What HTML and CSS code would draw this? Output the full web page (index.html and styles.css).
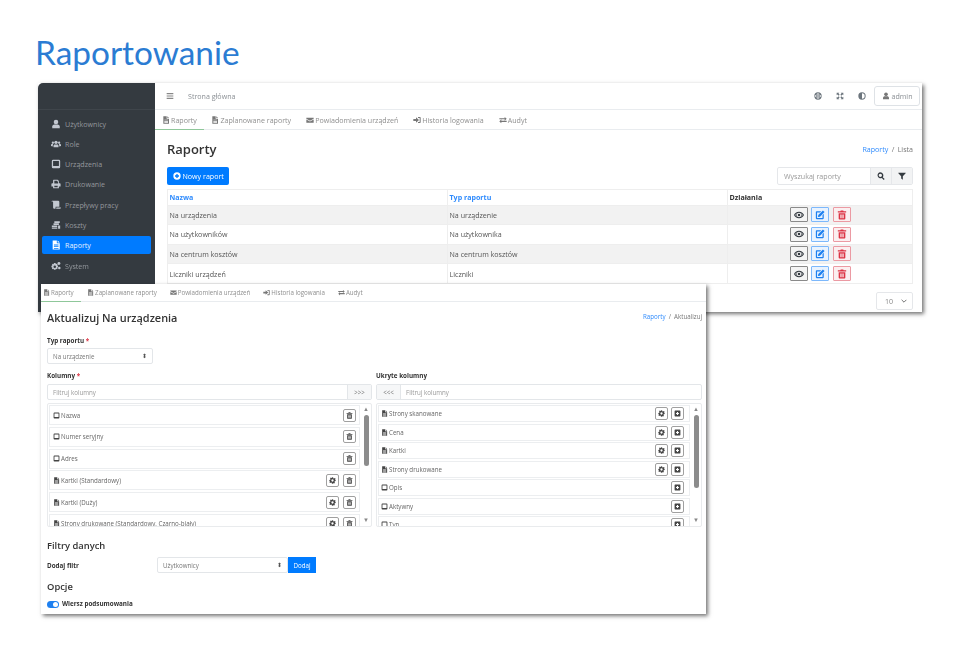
FILE: index.html
```html
<!DOCTYPE html>
<html lang="pl">
<head>
  <meta charset="UTF-8">
  <title>Raportowanie</title>
  <link rel="stylesheet" href="styles.css">
</head>
<body>
  <svg class="defs" width="0" height="0">
    <symbol id="i-user" viewBox="0 0 24 24"><circle cx="12" cy="7" r="5.5"/><path d="M3 22v-4c0-3 3-5 5-5h8c2 0 5 2 5 5v4z"/></symbol>
    <symbol id="i-users" viewBox="0 0 24 24"><circle cx="12" cy="8" r="4"/><circle cx="4.5" cy="9" r="2.8"/><circle cx="19.5" cy="9" r="2.8"/><path d="M6 20v-4c0-2 2-3 3-3h6c1 0 3 1 3 3v4zM0 17v-3c0-1 1-2 2-2h3l-1 6zM24 17v-3c0-1-1-2-2-2h-3l1 6z"/></symbol>
    <symbol id="i-tablet" viewBox="0 0 24 24"><path fill-rule="evenodd" d="M5 2h14a3 3 0 0 1 3 3v14a3 3 0 0 1-3 3H5a3 3 0 0 1-3-3V5a3 3 0 0 1 3-3zm0 3v12h14V5z"/></symbol>
    <symbol id="i-print" viewBox="0 0 24 24"><path fill-rule="evenodd" d="M6 2h10l3 3v5h2a2 2 0 0 1 2 2v6h-4v4H5v-4H1v-6a2 2 0 0 1 2-2h2V3zm2 2v7h9V6h-2V4zM8 16v4h8v-4z"/></symbol>
    <symbol id="i-scroll" viewBox="0 0 24 24"><path d="M3 2h14a3 3 0 0 1 3 3v11h-9v3a2 2 0 0 1-2 2H8a3 3 0 0 1-3-3V5a1.5 1.5 0 0 0-1.500-1.500H1A2 2 0 0 1 3 2z"/><path d="M13 18h11a3 3 0 0 1-3 3H12a4 4 0 0 0 1-3z"/></symbol>
    <symbol id="i-coins" viewBox="0 0 24 24"><path d="M8 3h13v4H8zM6 8h13v4H6zM2 13h13v4H2zM2 18h13v3H2zM17 13h5v8h-5z"/></symbol>
    <symbol id="i-file" viewBox="0 0 24 24"><path fill-rule="evenodd" d="M4 1h10v7h7v15H4zM16 1l5 5h-5zM7 11v2h11v-2zm0 4v2h11v-2zm0 4v2h11v-2z"/></symbol>
    <symbol id="i-cogs" viewBox="0 0 24 24"><path fill-rule="evenodd" d="M7 5h4l.6 2.4 2.2-.9 2 2-1 2.2 2.200.8v3.500l-2.200.6 1 2.200-2 2-2.200-1L11 21H7l-.6-2.200-2.200 1-2-2 1-2.200L1 15v-3.500l2.200-.6-1-2.200 2-2 2.200 1zm2 5.500a3 3 0 1 0 0 6 3 3 0 0 0 0-6z"/><circle cx="19" cy="6" r="3.5"/><circle cx="20" cy="17" r="3"/></symbol>
    <symbol id="i-mail" viewBox="0 0 24 24"><path d="M1 5h22v3l-11 6L1 8zM1 10.500l11 6 11-6V20H1z"/></symbol>
    <symbol id="i-signin" viewBox="0 0 24 24"><path d="M1 9h8V4l9 8-9 8v-5H1z"/><path d="M15 3h6a2 2 0 0 1 2 2v14a2 2 0 0 1-2 2h-6v-3h5V6h-5z"/></symbol>
    <symbol id="i-exchange" viewBox="0 0 24 24"><path d="M1 7h16V3l6 5.500-6 5.500v-4H1zM23 14H7v-4l-6 6.500L7 22v-4h16z"/></symbol>
    <symbol id="i-bars" viewBox="0 0 24 24"><path d="M2 3h20v3.500H2zM2 10.200h20v3.500H2zM2 17.500h20V21H2z"/></symbol>
    <symbol id="i-globe" viewBox="0 0 24 24"><path fill-rule="evenodd" d="M12 1a11 11 0 1 1 0 22 11 11 0 0 1 0-22zM11 3c-2 1-3 3-3.500 5H11zm2 0v5h3.500c-.5-2-1.500-4-3.500-5zM3.500 10a9 9 0 0 0 0 4h3.800a20 20 0 0 1 0-4zm5.800 0a20 20 0 0 0 0 4H11v-4zm3.700 0v4h1.700a20 20 0 0 0 0-4zm3.700 0a20 20 0 0 1 0 4h3.800a9 9 0 0 0 0-4zM7.500 16c.5 2 1.500 4 3.500 5v-5zm5.500 0v5c2-1 3-3 3.500-5z"/></symbol>
    <symbol id="i-expand" viewBox="0 0 24 24"><path d="M2 2h8L7.500 4.500 11 8l-3 3-3.500-3.500L2 10zM22 2v8l-2.500-2.500L16 11l-3-3 3.500-3.500L14 2zM2 22v-8l2.500 2.500L8 13l3 3-3.500 3.500L10 22zM22 22h-8l2.500-2.500L13 16l3-3 3.500 3.500L22 14z"/></symbol>
    <symbol id="i-half" viewBox="0 0 24 24"><path fill-rule="evenodd" d="M12 1a11 11 0 1 1 0 22 11 11 0 0 1 0-22zm0 3v16a8 8 0 0 0 0-16z"/></symbol>
    <symbol id="i-plus" viewBox="0 0 24 24"><path fill-rule="evenodd" d="M12 1a11 11 0 1 1 0 22 11 11 0 0 1 0-22zm-2 5v4H6v4h4v4h4v-4h4v-4h-4V6z"/></symbol>
    <symbol id="i-search" viewBox="0 0 24 24"><path fill-rule="evenodd" d="M10 1a9 9 0 0 1 7.200 14.400l5.800 5.800-2.800 2.800-5.800-5.800A9 9 0 1 1 10 1zm0 4a5 5 0 1 0 0 10 5 5 0 0 0 0-10z"/></symbol>
    <symbol id="i-filter" viewBox="0 0 24 24"><path d="M1 2h22v2l-8.500 9v10l-5-3.500V13L1 4z"/></symbol>
    <symbol id="i-eye" viewBox="0 0 24 24"><path fill-rule="evenodd" d="M12 4c6 0 10 4 12 8-2 4-6 8-12 8S2 16 0 12c2-4 6-8 12-8zm0 2.500a5.500 5.500 0 1 0 0 11 5.500 5.500 0 0 0 0-11zM3 12c1 2 2.500 3.500 4 4.500a7 7 0 0 1 0-9C5.500 8.500 4 10 3 12zm14-4.500a7 7 0 0 1 0 9c1.500-1 3-2.500 4-4.500-1-2-2.500-3.500-4-4.500z"/><circle cx="12" cy="12" r="3"/></symbol>
    <symbol id="i-edit" viewBox="0 0 24 24"><path d="M4 3h11l-3 3H5v13h13v-7l3-3v11a2 2 0 0 1-2 2H4a2 2 0 0 1-2-2V5a2 2 0 0 1 2-2z"/><path d="M19 1l4 4-11 11-5 1 1-5z"/></symbol>
    <symbol id="i-trash" viewBox="0 0 24 24"><path fill-rule="evenodd" d="M9 1h6l1 2h6v3H2V3h6zM4 8h16v13a2 2 0 0 1-2 2H6a2 2 0 0 1-2-2zm4 3v9h2v-9zm3 0v9h2v-9zm3 0v9h2v-9z"/></symbol>
    <symbol id="i-gear" viewBox="0 0 24 24"><path fill-rule="evenodd" d="M10 1h4l.7 3.200 2.400 1 2.800-1.700 2.800 2.800-1.700 2.800 1 2.400L23 10v4l-3.200.7-1 2.400 1.700 2.800-2.800 2.800-2.800-1.700-2.400 1L14 23h-4l-.7-3.200-2.400-1-2.800 1.700-2.800-2.800 1.700-2.800-1-2.400L1 14v-4l3.200-.7 1-2.400-1.700-2.800 2.800-2.800 2.800 1.700 2.400-1zm2 7a4 4 0 1 0 0 8 4 4 0 0 0 0-8z"/></symbol>
    <symbol id="i-addbox" viewBox="0 0 24 24"><path fill-rule="evenodd" d="M4 2h16a2 2 0 0 1 2 2v16a2 2 0 0 1-2 2H4a2 2 0 0 1-2-2V4a2 2 0 0 1 2-2zm6 5v3H7v4h3v3h4v-3h3v-4h-3V7z"/></symbol>
  </svg>

  <h1 class="slide-title">Raportowanie</h1>

  <!-- Back window: report list -->
  <section class="window window-back">
    <aside class="sidebar">
      <div class="brand"></div>
      <a class="side-link"><svg class="ico"><use href="#i-user"/></svg>Użytkownicy</a>
      <a class="side-link"><svg class="ico"><use href="#i-users"/></svg>Role</a>
      <a class="side-link"><svg class="ico"><use href="#i-tablet"/></svg>Urządzenia</a>
      <a class="side-link"><svg class="ico"><use href="#i-print"/></svg>Drukowanie</a>
      <a class="side-link"><svg class="ico"><use href="#i-scroll"/></svg>Przepływy pracy</a>
      <a class="side-link"><svg class="ico"><use href="#i-coins"/></svg>Koszty</a>
      <a class="side-link active"><svg class="ico"><use href="#i-file"/></svg>Raporty</a>
      <a class="side-link"><svg class="ico"><use href="#i-cogs"/></svg>System</a>
    </aside>
    <div class="main">
      <header class="topbar">
        <svg class="ico top-bars"><use href="#i-bars"/></svg>
        <span class="home">Strona główna</span>
        <span class="spacer"></span>
        <svg class="ico top-ico"><use href="#i-globe"/></svg>
        <svg class="ico top-ico"><use href="#i-expand"/></svg>
        <svg class="ico top-ico"><use href="#i-half"/></svg>
        <span class="admin"><svg class="ico"><use href="#i-user"/></svg>admin</span>
      </header>
      <nav class="tabs">
        <a class="tab current"><svg class="ico"><use href="#i-file"/></svg>Raporty</a>
        <a class="tab"><svg class="ico"><use href="#i-file"/></svg>Zaplanowane raporty</a>
        <a class="tab"><svg class="ico"><use href="#i-mail"/></svg>Powiadomienia urządzeń</a>
        <a class="tab"><svg class="ico"><use href="#i-signin"/></svg>Historia logowania</a>
        <a class="tab"><svg class="ico"><use href="#i-exchange"/></svg>Audyt</a>
      </nav>
      <div class="content">
        <div class="head-row">
          <h2 class="page-title">Raporty</h2>
          <div class="crumbs"><a>Raporty</a> / Lista</div>
        </div>
        <div class="tool-row">
          <a class="btn-new"><svg class="ico"><use href="#i-plus"/></svg>Nowy raport</a>
          <div class="search">
            <span class="search-field">Wyszukaj raporty</span>
            <span class="search-btn"><svg class="ico"><use href="#i-search"/></svg></span>
            <span class="search-btn"><svg class="ico"><use href="#i-filter"/></svg></span>
          </div>
        </div>
        <table class="reports">
          <thead>
            <tr><th class="sort">Nazwa</th><th class="sort">Typ raportu</th><th>Działania</th></tr>
          </thead>
          <tbody>
            <tr>
              <td>Na urządzenia</td><td>Na urządzenie</td>
              <td class="acts"><span class="act view"><svg class="ico"><use href="#i-eye"/></svg></span><span class="act edit"><svg class="ico"><use href="#i-edit"/></svg></span><span class="act del"><svg class="ico"><use href="#i-trash"/></svg></span></td>
            </tr>
            <tr>
              <td>Na użytkowników</td><td>Na użytkownika</td>
              <td class="acts"><span class="act view"><svg class="ico"><use href="#i-eye"/></svg></span><span class="act edit"><svg class="ico"><use href="#i-edit"/></svg></span><span class="act del"><svg class="ico"><use href="#i-trash"/></svg></span></td>
            </tr>
            <tr>
              <td>Na centrum kosztów</td><td>Na centrum kosztów</td>
              <td class="acts"><span class="act view"><svg class="ico"><use href="#i-eye"/></svg></span><span class="act edit"><svg class="ico"><use href="#i-edit"/></svg></span><span class="act del"><svg class="ico"><use href="#i-trash"/></svg></span></td>
            </tr>
            <tr>
              <td>Liczniki urządzeń</td><td>Liczniki</td>
              <td class="acts"><span class="act view"><svg class="ico"><use href="#i-eye"/></svg></span><span class="act edit"><svg class="ico"><use href="#i-edit"/></svg></span><span class="act del"><svg class="ico"><use href="#i-trash"/></svg></span></td>
            </tr>
          </tbody>
        </table>
        <div class="pager"><span class="page-size">10<svg class="chev" viewBox="0 0 10 6"><path d="M1 1l4 4 4-4"/></svg></span></div>
      </div>
    </div>
  </section>

  <!-- Front window: edit report -->
  <section class="window window-front">
    <nav class="tabs tabs-front">
      <a class="tab current"><svg class="ico"><use href="#i-file"/></svg>Raporty</a>
      <a class="tab"><svg class="ico"><use href="#i-file"/></svg>Zaplanowane raporty</a>
      <a class="tab"><svg class="ico"><use href="#i-mail"/></svg>Powiadomienia urządzeń</a>
      <a class="tab"><svg class="ico"><use href="#i-signin"/></svg>Historia logowania</a>
      <a class="tab"><svg class="ico"><use href="#i-exchange"/></svg>Audyt</a>
    </nav>
    <div class="form">
      <div class="form-head">
        <h2 class="form-title">Aktualizuj Na urządzenia</h2>
        <div class="crumbs crumbs-small"><a>Raporty</a> / Aktualizuj</div>
      </div>
      <label class="lbl lbl-type">Typ raportu <i>*</i></label>
      <div class="select select-type">Na urządzenie<span class="updown">⬍</span></div>

      <div class="columns">
        <div class="col col-left">
          <label class="lbl">Kolumny <i>*</i></label>
          <div class="filter-group">
            <span class="filter-field">Filtruj kolumny</span>
            <span class="filter-addon addon-right">&gt;&gt;&gt;</span>
          </div>
          <div class="list-box">
            <div class="rows rows-left">
              <div class="row"><svg class="ico"><use href="#i-tablet"/></svg>Nazwa<span class="spacer"></span><span class="mini"><svg class="ico"><use href="#i-trash"/></svg></span></div>
              <div class="row"><svg class="ico"><use href="#i-tablet"/></svg>Numer seryjny<span class="spacer"></span><span class="mini"><svg class="ico"><use href="#i-trash"/></svg></span></div>
              <div class="row"><svg class="ico"><use href="#i-tablet"/></svg>Adres<span class="spacer"></span><span class="mini"><svg class="ico"><use href="#i-trash"/></svg></span></div>
              <div class="row"><svg class="ico"><use href="#i-file"/></svg>Kartki (Standardowy)<span class="spacer"></span><span class="mini"><svg class="ico"><use href="#i-gear"/></svg></span><span class="mini"><svg class="ico"><use href="#i-trash"/></svg></span></div>
              <div class="row"><svg class="ico"><use href="#i-file"/></svg>Kartki (Duży)<span class="spacer"></span><span class="mini"><svg class="ico"><use href="#i-gear"/></svg></span><span class="mini"><svg class="ico"><use href="#i-trash"/></svg></span></div>
              <div class="row"><svg class="ico"><use href="#i-file"/></svg>Strony drukowane (Standardowy, Czarno-biały)<span class="spacer"></span><span class="mini"><svg class="ico"><use href="#i-gear"/></svg></span><span class="mini"><svg class="ico"><use href="#i-trash"/></svg></span></div>
            </div>
            <div class="scroll"><span class="arrow">▲</span><span class="track"><span class="thumb thumb-left"></span></span><span class="arrow">▼</span></div>
          </div>
        </div>

        <div class="col col-right">
          <label class="lbl">Ukryte kolumny</label>
          <div class="filter-group">
            <span class="filter-addon addon-left">&lt;&lt;&lt;</span>
            <span class="filter-field">Filtruj kolumny</span>
          </div>
          <div class="list-box">
            <div class="rows rows-right">
              <div class="row"><svg class="ico"><use href="#i-file"/></svg>Strony skanowane<span class="spacer"></span><span class="mini"><svg class="ico"><use href="#i-gear"/></svg></span><span class="mini"><svg class="ico"><use href="#i-addbox"/></svg></span></div>
              <div class="row"><svg class="ico"><use href="#i-file"/></svg>Cena<span class="spacer"></span><span class="mini"><svg class="ico"><use href="#i-gear"/></svg></span><span class="mini"><svg class="ico"><use href="#i-addbox"/></svg></span></div>
              <div class="row"><svg class="ico"><use href="#i-file"/></svg>Kartki<span class="spacer"></span><span class="mini"><svg class="ico"><use href="#i-gear"/></svg></span><span class="mini"><svg class="ico"><use href="#i-addbox"/></svg></span></div>
              <div class="row"><svg class="ico"><use href="#i-file"/></svg>Strony drukowane<span class="spacer"></span><span class="mini"><svg class="ico"><use href="#i-gear"/></svg></span><span class="mini"><svg class="ico"><use href="#i-addbox"/></svg></span></div>
              <div class="row"><svg class="ico"><use href="#i-tablet"/></svg>Opis<span class="spacer"></span><span class="mini"><svg class="ico"><use href="#i-addbox"/></svg></span></div>
              <div class="row"><svg class="ico"><use href="#i-tablet"/></svg>Aktywny<span class="spacer"></span><span class="mini"><svg class="ico"><use href="#i-addbox"/></svg></span></div>
              <div class="row"><svg class="ico"><use href="#i-tablet"/></svg>Typ<span class="spacer"></span><span class="mini"><svg class="ico"><use href="#i-addbox"/></svg></span></div>
            </div>
            <div class="scroll"><span class="arrow">▲</span><span class="track"><span class="thumb thumb-right"></span></span><span class="arrow">▼</span></div>
          </div>
        </div>
      </div>

      <h3 class="sub-title sub-filters">Filtry danych</h3>
      <div class="filter-row">
        <label class="lbl lbl-inline">Dodaj filtr</label>
        <div class="select select-filter">Użytkownicy<span class="updown">⬍</span></div>
        <a class="btn-add">Dodaj</a>
      </div>
      <h3 class="sub-title sub-options">Opcje</h3>
      <div class="switch-row"><span class="switch"><span class="knob"></span></span><label class="lbl lbl-inline">Wiersz podsumowania</label></div>
    </div>
  </section>
</body>
</html>
```

FILE: styles.css
```css
/* General */
body {
  margin: 0;
  width: 958px;
  height: 652px;
  position: relative;
  overflow: hidden;
  background: #fff;
  font-family: "Open Sans", Arial, sans-serif;
  font-size: 7.1px;
  color: #555;
}

.defs {
  position: absolute;
}

.ico {
  width: 8px;
  height: 8px;
  fill: currentColor;
  flex: none;
}

.spacer {
  flex: 1;
}

.slide-title {
  position: absolute;
  left: 35px;
  top: 32px;
  margin: 0;
  font-family: Lato, "Liberation Sans", sans-serif;
  font-size: 33.4px;
  font-weight: 400;
  line-height: 40px;
  color: #2b7cd3;
}

/* Windows */
.window {
  position: absolute;
  background: #fff;
  box-shadow: 2px 2px 4px rgba(0, 0, 0, 0.55);
  filter: blur(0.4px);
}

.window-back {
  left: 38px;
  top: 83px;
  width: 884px;
  height: 229px;
  display: flex;
  overflow: hidden;
}

.window-front {
  left: 41px;
  top: 284px;
  width: 665px;
  height: 330px;
}

/* Sidebar */
.sidebar {
  width: 117px;
  flex: none;
  background: #343a40;
  border-top-left-radius: 5px;
  box-sizing: border-box;
  padding: 0 4px;
}

.brand {
  height: 27px;
  margin: 0 -4px 4.5px;
  border-bottom: 1px solid #3f454b;
  box-sizing: border-box;
}

.side-link {
  display: flex;
  align-items: center;
  gap: 4px;
  height: 18px;
  margin-bottom: 2.3px;
  padding-left: 9px;
  border-radius: 2px;
  color: #94989d;
}

.side-link .ico {
  width: 10px;
  height: 10px;
  color: #c2c7d0;
}

.side-link.active {
  background: #007bff;
  color: #e6f1ff;
}

.side-link.active .ico {
  color: #fff;
}

/* Top bar */
.main {
  flex: 1;
  min-width: 0;
  display: flex;
  flex-direction: column;
}

.topbar {
  height: 27px;
  flex: none;
  display: flex;
  align-items: center;
  border-bottom: 1px solid #e9ecef;
  box-sizing: border-box;
  padding: 0 2px 0 11px;
  color: #8a8f94;
}

.top-bars {
  color: #888;
}

.home {
  margin-left: 14px;
}

.top-ico {
  margin-right: 14px;
  color: #6c757d;
}

.top-ico + .admin {
  margin-left: -6px;
}

.admin {
  display: flex;
  align-items: center;
  justify-content: center;
  gap: 2px;
  width: 46px;
  height: 20px;
  border: 1px solid #dee2e6;
  border-radius: 3px;
  box-sizing: border-box;
}

.admin .ico {
  color: #777;
}

/* Tabs */
.tabs {
  height: 20px;
  flex: none;
  display: flex;
  border-bottom: 1px solid #e9ecef;
  box-sizing: border-box;
  color: #8f8f8f;
}

.tab {
  display: flex;
  align-items: center;
  gap: 1px;
  padding: 0 7.5px;
}

.tab .ico {
  color: #777;
}

.tab.current {
  border-bottom: 1px solid #8fc79a;
  margin-bottom: -1px;
  padding: 0 7px;
}

/* Report list */
.content {
  padding: 0 9px 0 12px;
}

.head-row {
  display: flex;
  justify-content: space-between;
  align-items: center;
  height: 37px;
}

.page-title {
  margin: 0;
  font-size: 13px;
  font-weight: 600;
  color: #333;
}

.crumbs {
  color: #777;
  word-spacing: 1.5px;
}

.crumbs a {
  color: #2f8bfd;
}

.tool-row {
  display: flex;
  justify-content: space-between;
  height: 18px;
  margin-bottom: 3.5px;
}

.btn-new {
  display: flex;
  align-items: center;
  gap: 2px;
  padding: 0 5px 0 6px;
  margin-left: -0.5px;
  background: #007bff;
  border-radius: 2px;
  color: #fff;
}

.search {
  display: flex;
  width: 136px;
  border: 1px solid #e5e7ea;
  border-radius: 2px;
  box-sizing: border-box;
  color: #999;
}

.search-field {
  flex: 1;
  display: flex;
  align-items: center;
  padding-left: 6px;
}

.search-btn {
  width: 20px;
  display: flex;
  align-items: center;
  justify-content: center;
  background: #f2f3f4;
  border-left: 1px solid #e5e7ea;
  color: #343a40;
}

.reports {
  width: 746px;
  border-collapse: collapse;
  table-layout: fixed;
}

.reports th,
.reports td {
  height: 19.6px;
  padding: 0 1.5px;
  border: 1px solid #eee;
  text-align: left;
  box-sizing: border-box;
}

.reports th {
  height: 16px;
  font-weight: 700;
  color: #333;
}

.reports th.sort {
  color: #2f8bfd;
}

.reports th:nth-child(1),
.reports th:nth-child(2) {
  width: 280px;
}

.reports tbody tr:nth-child(odd) {
  background: #f2f2f2;
}

.reports td.acts {
  text-align: center;
}

.act {
  display: inline-flex;
  align-items: center;
  justify-content: center;
  width: 18px;
  height: 15px;
  margin: 0 1.75px;
  border: 1px solid #8a8a8a;
  border-radius: 1px;
  box-sizing: border-box;
  vertical-align: middle;
  background: #f4f4f4;
}

.act .ico {
  width: 10px;
  height: 10px;
}

.act.view {
  color: #343a40;
}

.act.edit {
  border-color: #7db8fb;
  background: #e9f3ff;
  color: #1e80f0;
}

.act.del {
  border-color: #eb9aa3;
  background: #fbeff0;
  color: #dc3545;
}

.pager {
  display: flex;
  justify-content: flex-end;
  margin-top: 8px;
}

.page-size {
  display: flex;
  align-items: center;
  justify-content: space-between;
  width: 37px;
  height: 18px;
  padding: 0 2px 0 8px;
  border: 1px solid #e5e7ea;
  border-radius: 2px;
  box-sizing: border-box;
  color: #888;
}

.chev {
  width: 6px;
  height: 4px;
  margin-right: 3px;
  fill: none;
  stroke: #666;
  stroke-width: 1.5;
}

/* Edit form */
.tabs-front {
  height: 18px;
  font-size: 6.2px;
}

.tabs-front .tab {
  padding: 0 6.5px;
}

.tabs-front .ico {
  width: 7px;
  height: 7px;
}

.tabs-front .tab.current {
  padding: 0 7px 0 2px;
}

.form {
  padding: 0 4px 0 6px;
}

.form-head {
  display: flex;
  justify-content: space-between;
  height: 32px;
  align-items: center;
}

.form-title {
  margin: 0 0 1px;
  font-size: 10.9px;
  font-weight: 600;
  color: #333;
}

.crumbs-small {
  font-size: 6.2px;
  margin-bottom: 3px;
}

.lbl {
  display: block;
  height: 10px;
  line-height: 10px;
  font-size: 6.3px;
  font-weight: 700;
  color: #333;
}

.lbl i {
  font-style: normal;
  color: #dc3545;
}

.lbl-type {
  margin-top: 2px;
}

.select {
  display: flex;
  align-items: center;
  justify-content: space-between;
  height: 16px;
  padding: 0 5px;
  border: 1px solid #e3e6e9;
  border-radius: 2px;
  box-sizing: border-box;
  font-size: 6.2px;
  color: #777;
}

.updown {
  font-size: 6px;
  color: #555;
}

.select-type {
  width: 106px;
  margin-top: 2px;
}

.columns {
  display: flex;
  gap: 4px;
  margin-top: 7px;
}

.col {
  width: 325px;
}

.col-right {
  width: 326px;
}

.filter-group {
  display: flex;
  height: 16px;
  margin-top: 3px;
  border: 1px solid #e3e6e9;
  border-radius: 2px;
  box-sizing: border-box;
  font-size: 6.2px;
  color: #999;
}

.filter-field {
  flex: 1;
  display: flex;
  align-items: center;
  padding-left: 5px;
}

.filter-addon {
  width: 23px;
  display: flex;
  align-items: center;
  justify-content: center;
  background: #f6f7f8;
  color: #777;
}

.addon-right {
  border-left: 1px solid #e3e6e9;
}

.addon-left {
  border-right: 1px solid #e3e6e9;
}

.list-box {
  display: flex;
  height: 124px;
  margin-top: 3px;
  border: 1px solid #e9ebed;
  border-radius: 2px;
  box-sizing: border-box;
  overflow: hidden;
}

.rows {
  flex: 1;
  min-width: 0;
  overflow: hidden;
  padding: 1px 1px 0;
}

.row {
  display: flex;
  align-items: center;
  gap: 1px;
  padding: 0 3px;
  border: 1px solid #eceef0;
  box-sizing: border-box;
  font-size: 6.2px;
  color: #666;
  white-space: nowrap;
}

.row > .ico {
  width: 7px;
  height: 7px;
  color: #444;
}

.rows-left .row {
  height: 20px;
  margin-bottom: 1.75px;
}

.rows-right .row {
  height: 17px;
  margin-bottom: 1.5px;
  padding-right: 5px;
}

.rows-right .row > .ico {
  margin-left: -1px;
}

.mini {
  display: flex;
  align-items: center;
  justify-content: center;
  width: 13px;
  height: 13px;
  margin-left: 3px;
  border: 1px solid #a0a0a0;
  border-radius: 2px;
  box-sizing: border-box;
  color: #444;
}

.mini .ico {
  width: 7px;
  height: 7px;
}

.rows-right .mini {
  margin-left: 2px;
}

.scroll {
  width: 10px;
  flex: none;
  display: flex;
  flex-direction: column;
  align-items: center;
  padding: 2px 0;
  box-sizing: border-box;
}

.arrow {
  height: 7px;
  line-height: 7px;
  font-size: 6px;
  color: #888;
}

.track {
  flex: 1;
  width: 5px;
  padding-top: 2px;
}

.thumb {
  display: block;
  width: 5px;
  background: #8c8c8c;
  border-radius: 2.5px;
}

.thumb-left {
  height: 51px;
}

.thumb-right {
  height: 73px;
}

.sub-title {
  margin: 0;
  font-size: 9.4px;
  font-weight: 600;
  color: #333;
}

.sub-filters {
  margin-top: 12px;
  line-height: 14px;
}

.filter-row {
  display: flex;
  align-items: center;
  margin-top: 4px;
}

.lbl-inline {
  display: inline-block;
}

.filter-row .lbl {
  width: 110px;
  padding-top: 1px;
}

.select-filter {
  width: 131px;
}

.btn-add {
  display: flex;
  align-items: center;
  justify-content: center;
  width: 28px;
  height: 16px;
  background: #007bff;
  font-size: 6.2px;
  color: #fff;
}

.sub-options {
  margin-top: 7px;
  line-height: 14px;
}

.switch-row {
  display: flex;
  align-items: center;
  gap: 3px;
  margin-top: 5px;
}

.switch {
  display: flex;
  justify-content: flex-end;
  align-items: center;
  width: 12px;
  height: 7px;
  padding: 1px;
  background: #1e80f0;
  border-radius: 4px;
  box-sizing: border-box;
}

.knob {
  width: 5px;
  height: 5px;
  background: #fff;
  border-radius: 50%;
}
```
